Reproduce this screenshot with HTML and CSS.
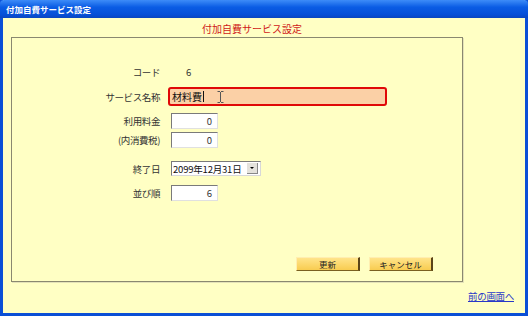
FILE: index.html
```html
<!DOCTYPE html>
<html lang="ja">
<head>
    <meta charset="UTF-8">
    <title>付加自費サービス設定</title>
    <link rel="stylesheet" href="styles.css">
</head>
<body>
    <div class="window">
        <div class="titlebar">付加自費サービス設定</div>
        <div class="content">
            <h1 class="heading">付加自費サービス設定</h1>
            <div class="panel">
                <div class="form">
                    <div class="row row-code">
                        <span class="label">コード</span>
                        <span class="code">6</span>
                    </div>
                    <div class="row row-name">
                        <span class="label">サービス名称</span>
                        <div class="field field-active">
                            <span>材料費</span>
                            <span class="caret"></span>
                            <svg class="ibeam" width="7" height="12" viewBox="0 0 7 12">
                                <path d="M0.5 0.5h2.5M4 0.5h2.5M3.5 1v10M0.5 11.5h2.5M4 11.5h2.5" stroke="#555" stroke-width="1" fill="none"/>
                            </svg>
                        </div>
                    </div>
                    <div class="row row-fee">
                        <span class="label">利用料金</span>
                        <div class="field field-num">0</div>
                    </div>
                    <div class="row row-tax">
                        <span class="label">(内消費税)</span>
                        <div class="field field-num">0</div>
                    </div>
                    <div class="row row-end">
                        <span class="label">終了日</span>
                        <div class="select">
                            <span class="select-text">2099年12月31日</span>
                            <span class="select-btn"><span class="arrow"></span></span>
                        </div>
                    </div>
                    <div class="row row-order">
                        <span class="label">並び順</span>
                        <div class="field field-num">6</div>
                    </div>
                </div>
                <div class="buttons">
                    <button class="btn">更新</button>
                    <button class="btn">キャンセル</button>
                </div>
            </div>
            <div class="footer">
                <a href="#" class="back">前の画面へ</a>
            </div>
        </div>
    </div>
</body>
</html>
```

FILE: styles.css
```css
body {
    margin: 0;
    padding: 0;
    font-family: "Noto Sans CJK JP", "DejaVu Sans", sans-serif;
    font-size: 9.5px;
    color: #333;
}
.window {
    width: 528px;
    height: 316px;
    box-sizing: border-box;
    display: flex;
    flex-direction: column;
    background: #ffffc4;
    border: 3px solid #0a4fd6;
    border-top: none;
}
.titlebar {
    height: 18px;
    margin: 0 -3px;
    padding-left: 6px;
    border-radius: 4px 4px 0 0;
    background: linear-gradient(#3d8cf8, #0a5ce4 40%, #0650d8 80%, #0a46c0);
    color: #fff;
    font-size: 8.5px;
    font-weight: bold;
    line-height: 18px;
}
.content {
    flex: 1;
    display: flex;
    flex-direction: column;
    padding: 4px 11px 0 8px;
}
.heading {
    margin: 0 0 1px 191px;
    height: 14px;
    font-size: 10px;
    font-weight: normal;
    line-height: 14px;
    color: #d01818;
}
.panel {
    width: 452px;
    height: 245px;
    box-sizing: border-box;
    display: flex;
    flex-direction: column;
    border: 1px solid #8a8870;
    box-shadow: 1px 1px 0 #e4e2b8;
    padding: 26px 29px 10px 0;
}
.row {
    display: flex;
    align-items: center;
}
.label {
    width: 148px;
    text-align: right;
    margin-right: 8px;
    letter-spacing: -0.4px;
    color: #333;
}
.row-code { height: 16px; }
.row-name { height: 19px; margin-top: 7px; }
.row-fee { height: 16px; margin-top: 7px; }
.row-tax { height: 16px; margin-top: 3px; }
.row-end { height: 15px; margin-top: 13px; }
.row-order { height: 16px; margin-top: 9px; }
.code {
    margin-left: 18px;
}
.field {
    box-sizing: border-box;
    height: 16px;
    background: #fff;
    border-top: 1px solid #7a7a7a;
    border-left: 1px solid #7a7a7a;
    border-right: 1px solid #e0e0e0;
    border-bottom: 1px solid #e0e0e0;
    line-height: 14px;
    color: #333;
}
.field-num {
    width: 47px;
    margin-left: 3px;
    text-align: right;
    padding-right: 5px;
}
.field-active {
    width: 219px;
    height: 19px;
    display: flex;
    align-items: center;
    padding-left: 2px;
    border: 2px solid #e00808;
    border-radius: 3px;
    background: #fbd0a6;
    color: #111;
    font-size: 10px;
}
.caret {
    width: 1px;
    height: 11px;
    margin-left: 1px;
    background: #111;
}
.ibeam {
    margin-left: 13px;
}
.select {
    box-sizing: border-box;
    width: 90px;
    height: 15px;
    margin-left: 3px;
    display: flex;
    align-items: center;
    background: #fff;
    border-top: 1px solid #7a7a7a;
    border-left: 1px solid #7a7a7a;
    border-right: 1px solid #d8d8d8;
    border-bottom: 1px solid #d8d8d8;
}
.select-text {
    flex: 1;
    padding-left: 1px;
    letter-spacing: -0.2px;
    color: #111;
}
.select-btn {
    width: 10px;
    height: 10px;
    margin-right: 2px;
    display: flex;
    align-items: center;
    justify-content: center;
    background: #e4e2dc;
    border-right: 1px solid #888;
    border-bottom: 1px solid #888;
}
.arrow {
    width: 0;
    height: 0;
    border-left: 2px solid transparent;
    border-right: 2px solid transparent;
    border-top: 2px solid #000;
}
.buttons {
    margin-top: auto;
    display: flex;
    justify-content: flex-end;
    gap: 9px;
}
.btn {
    width: 64px;
    height: 14px;
    padding: 0;
    font-family: inherit;
    font-size: 8.5px;
    line-height: 12px;
    color: #222;
    background: linear-gradient(#ffe48a, #f8cc50);
    border: none;
    border-left: 1px solid #ffeeb0;
    border-top: 1px solid #ffeeb0;
    border-right: 2px solid #5a4418;
    border-bottom: 1px solid #7a6020;
}
.footer {
    display: flex;
    justify-content: flex-end;
    margin-top: 7px;
}
.back {
    color: #2838c8;
    font-size: 9.5px;
    letter-spacing: -0.3px;
}
```
